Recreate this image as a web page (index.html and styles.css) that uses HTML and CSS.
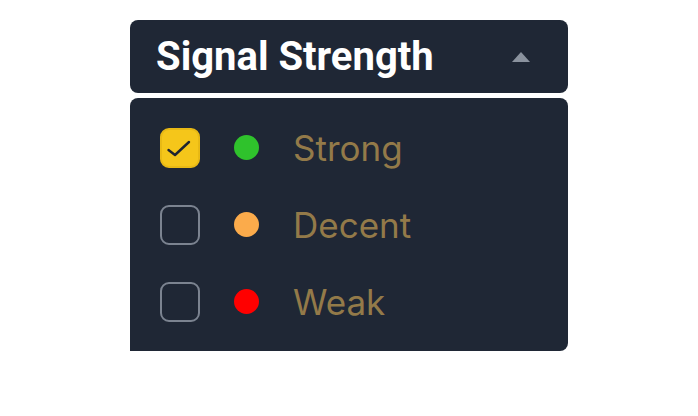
FILE: index.html
```html
<!DOCTYPE html>
<html lang="en">
<head>
    <meta charset="UTF-8">
    <meta name="viewport" content="width=device-width, initial-scale=1.0">
    <title>Signal Strength</title>
    <link rel="stylesheet" href="styles.css">
</head>
<body>

    <div class="picker">
        <div class="picker-head">
            <span class="picker-title">Signal Strength</span>
            <span class="caret"></span>
        </div>
        <ul class="picker-list">
            <li class="opt">
                <span class="box on">
                    <svg width="40" height="40" viewBox="0 0 40 40"><path d="M8.5 22l6.5 5 14-13" fill="none" stroke="#1f2430" stroke-width="2.4" stroke-linecap="round" stroke-linejoin="round"/></svg>
                </span>
                <span class="dot green"></span>
                <span class="lbl">Strong</span>
            </li>
            <li class="opt">
                <span class="box"></span>
                <span class="dot orange"></span>
                <span class="lbl">Decent</span>
            </li>
            <li class="opt">
                <span class="box"></span>
                <span class="dot red"></span>
                <span class="lbl">Weak</span>
            </li>
        </ul>
    </div>

</body>
</html>
```

FILE: styles.css
```css
body {
    margin: 0;
    background: #fff;
}
.picker {
    width: 438px;
    margin: 20px auto 0;
}
.picker-head {
    height: 73px;
    display: flex;
    align-items: center;
    justify-content: space-between;
    padding: 0 38px 0 26px;
    background-color: #1f2735;
    border-radius: 8px;
}
.picker-title {
    font-family: Roboto, sans-serif;
    font-weight: 700;
    font-size: 40px;
    color: #fff;
}
.caret {
    width: 0;
    height: 0;
    border-left: 9px solid transparent;
    border-right: 9px solid transparent;
    border-bottom: 10px solid #8a929e;
}
.picker-list {
    list-style: none;
    margin: 5px 0 0;
    padding: 11px 0 11px 30px;
    background-color: #1f2735;
    border-radius: 8px 8px 8px 0;
}
.opt {
    height: 77px;
    display: flex;
    align-items: center;
}
.box {
    width: 40px;
    height: 40px;
    box-sizing: border-box;
    border: 2px solid #7b8390;
    border-radius: 9px;
    position: relative;
}
.box.on {
    background-color: #f5c61a;
    border-color: #e8b915;
}
.box svg {
    position: absolute;
    left: -2px;
    top: -2px;
}
.dot {
    width: 25px;
    height: 25px;
    border-radius: 50%;
    margin: 0 34px;
}
.green {
    background-color: #2fc22c;
}
.orange {
    background-color: #fbab4b;
}
.red {
    background-color: #ff0000;
}
.lbl {
    font-family: Inter, sans-serif;
    font-size: 35px;
    color: #937a49;
}
```
